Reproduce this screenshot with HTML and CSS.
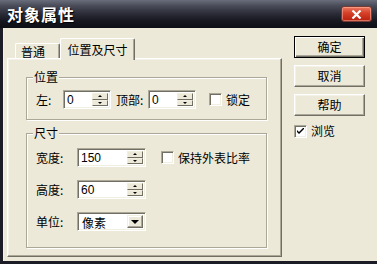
FILE: index.html
```html
<!DOCTYPE html>
<html>
<head>
<meta charset="utf-8">
<link rel="stylesheet" href="styles.css">
</head>
<body>
<div class="window">
  <div class="titlebar">
    <span class="title">对象属性</span>
    <span class="close"><svg width="11" height="9" viewBox="0 0 11 9"><path d="M1.5 0.5 L9.5 8.5 M9.5 0.5 L1.5 8.5" stroke="#fff" stroke-width="2.2" fill="none"/></svg></span>
  </div>
  <div class="client">
    <div class="tabctl">
      <div class="tabstrip">
        <div class="tab">普通</div>
        <div class="tab active">位置及尺寸</div>
      </div>
      <div class="panel">
        <fieldset class="group g-pos">
          <legend>位置</legend>
          <div class="row">
            <span class="lbl l-left">左:</span>
            <div class="edit e-small"><span class="val">0</span><span class="spin"><i class="up"></i><i class="dn"></i></span></div>
            <span class="lbl l-top">顶部:</span>
            <div class="edit e-small"><span class="val">0</span><span class="spin"><i class="up"></i><i class="dn"></i></span></div>
            <span class="check c-lock"><span class="box"></span>锁定</span>
          </div>
        </fieldset>
        <fieldset class="group g-size">
          <legend>尺寸</legend>
          <div class="row">
            <span class="lbl l-wide">宽度:</span>
            <div class="edit e-big"><span class="val">150</span><span class="spin"><i class="up"></i><i class="dn"></i></span></div>
            <span class="check c-ratio"><span class="box"></span>保持外表比率</span>
          </div>
          <div class="row">
            <span class="lbl l-wide">高度:</span>
            <div class="edit e-big"><span class="val">60</span><span class="spin"><i class="up"></i><i class="dn"></i></span></div>
          </div>
          <div class="row">
            <span class="lbl l-wide">单位:</span>
            <div class="edit e-big combo"><span class="val cjk">像素</span><span class="drop"><i></i></span></div>
          </div>
        </fieldset>
      </div>
    </div>
    <div class="side">
      <div class="btn default"><span>确定</span></div>
      <div class="btn">取消</div>
      <div class="btn">帮助</div>
      <span class="check c-browse"><span class="box checked"><svg width="7" height="7" viewBox="0 0 7 7"><path d="M0 2 L0 4 L2 6 L7 1 L7 -1 L2 4 Z" fill="#000"/></svg></span>浏览</span>
    </div>
  </div>
</div>
</body>
</html>
```

FILE: styles.css
```css
* { box-sizing: border-box; }
html, body {
  margin: 0;
  padding: 0;
  width: 377px;
  height: 264px;
  overflow: hidden;
  background: #1b1c26;
}
body {
  font-family: "Noto Sans CJK SC", "DejaVu Sans", sans-serif;
  font-size: 12px;
  line-height: 14px;
  color: #000;
}
.window {
  width: 377px;
  height: 264px;
  display: flex;
  flex-direction: column;
  background: #1b1c26;
}
.titlebar {
  height: 28px;
  flex: none;
  display: flex;
  align-items: center;
  padding: 0 5px 0 7px;
  background: linear-gradient(to bottom, #6a6d7b 0, #4a4c59 20%, #2a2b36 50%, #16171f 75%, #0e0f15 100%);
}
.title {
  flex: 1;
  color: #fff;
  font-weight: bold;
  font-size: 16px;
  letter-spacing: 1px;
  text-shadow: 1px 1px 1px #000;
}
.close {
  width: 31px;
  height: 16px;
  margin-top: 0;
  border-radius: 3px;
  border: 1px solid #7a3a34;
  background: linear-gradient(to bottom, #ee7a62 0, #d8432b 40%, #b81e0c 100%);
  box-shadow: inset 0 0 0 1px rgba(255, 190, 170, 0.5);
  display: flex;
  align-items: center;
  justify-content: center;
}
.close svg { display: block; }
.client {
  flex: 1;
  margin: 0 0 3px 3px;
  background: #ece9d8;
  display: flex;
  padding: 8px 0 0 3px;
  border-left: 1px solid #f4f2e8;
}
.tabctl {
  width: 275px;
  margin-top: 2px;
  display: flex;
  flex-direction: column;
  height: 219px;
}
.tabstrip {
  height: 20px;
  flex: none;
  display: flex;
  align-items: flex-end;
  padding-left: 8px;
  position: relative;
  z-index: 1;
}
.tab {
  height: 15px;
  width: 45px;
  padding: 1px 0 0 5px;
  border: 1px solid;
  border-color: #fff #716f64 transparent #fff;
  border-bottom: none;
  border-radius: 2px 2px 0 0;
  background: #ece9d8;
  box-shadow: inset -1px 0 0 #aca899;
}
.tab.active {
  height: 22px;
  width: 75px;
  margin-bottom: -2px;
  padding: 4px 0 0 0;
  text-align: center;
}
.panel {
  flex: 1;
  border: 1px solid;
  border-color: #fff #716f64 #716f64 #fff;
  box-shadow: inset -1px -1px 0 #aca899, inset 1px 1px 0 #f4f2e8;
  padding: 11px 0 0 18px;
}
.group {
  margin: 0;
  width: 241px;
  border: 1px solid #aca899;
  box-shadow: inset 1px 1px 0 #fff, 1px 1px 0 #fff;
  padding: 6px 0 10px 9px;
  min-width: 0;
}
.group legend {
  margin-left: -3px;
  padding: 0 1px;
  font-size: 12px;
  line-height: 14px;
  background: #ece9d8;
}
.g-size {
  margin-top: 6px;
  padding: 8px 0 16px 9px;
}
.row {
  display: flex;
  align-items: center;
  height: 19px;
}
.g-size .row + .row { margin-top: 13px; }
.lbl { white-space: nowrap; }
.l-left { width: 27px; }
.l-top { width: 32px; margin-left: 5px; }
.l-wide { width: 41px; }
.edit {
  height: 19px;
  display: flex;
  border: 1px solid;
  border-color: #aca899 #fff #fff #aca899;
  box-shadow: inset 1px 1px 0 #716f64, inset -1px -1px 0 #f1efe2;
  background: #fff;
  padding: 2px;
}
.e-small { width: 48px; }
.e-big { width: 69px; }
.val {
  flex: 1;
  font-family: "Liberation Sans", "DejaVu Sans", sans-serif;
  font-size: 12px;
  line-height: 15px;
  padding-left: 1px;
}
.val.cjk {
  font-family: "Noto Sans CJK SC", sans-serif;
  padding-left: 2px;
}
.spin {
  width: 16px;
  display: flex;
  flex-direction: column;
}
.spin i {
  flex: 1;
  background: #ece9d8;
  border: 1px solid;
  border-color: #f1efe2 #716f64 #716f64 #f1efe2;
  display: flex;
  align-items: center;
  justify-content: center;
}
.spin i::after {
  content: "";
  width: 0;
  height: 0;
  border-left: 2px solid transparent;
  border-right: 2px solid transparent;
}
.spin .up::after { border-bottom: 2px solid #000; }
.spin .dn::after { border-top: 2px solid #000; }
.drop {
  width: 16px;
  background: #ece9d8;
  border: 1px solid;
  border-color: #f1efe2 #716f64 #716f64 #f1efe2;
  box-shadow: inset -1px -1px 0 #aca899, inset 1px 1px 0 #fff;
  display: flex;
  align-items: center;
  justify-content: center;
}
.drop i {
  width: 0;
  height: 0;
  border-left: 4px solid transparent;
  border-right: 4px solid transparent;
  border-top: 4px solid #000;
  margin-top: 1px;
}
.check {
  display: flex;
  align-items: center;
  white-space: nowrap;
}
.box {
  width: 13px;
  height: 13px;
  margin-right: 4px;
  border: 1px solid;
  border-color: #aca899 #fff #fff #aca899;
  box-shadow: inset 1px 1px 0 #716f64, inset -1px -1px 0 #f1efe2;
  background: #fff;
  display: flex;
  align-items: center;
  justify-content: center;
}
.c-lock { margin-left: 13px; }
.c-ratio { margin-left: 15px; }
.side {
  margin-left: 12px;
  width: 71px;
  display: flex;
  flex-direction: column;
}
.btn {
  height: 22px;
  margin-bottom: 7px;
  display: flex;
  align-items: center;
  justify-content: center;
  background: #ece9d8;
  border: 1px solid;
  border-color: #fff #716f64 #716f64 #fff;
  box-shadow: inset -1px -1px 0 #aca899, inset 1px 1px 0 #f4f2e8;
}
.btn.default {
  border: 1px solid #000;
  box-shadow: inset 1px 1px 0 #fff, inset -1px -1px 0 #716f64, inset -2px -2px 0 #aca899;
}
.c-browse { margin-top: 1px; padding-left: 0; }
.box.checked svg { display: block; }
```
